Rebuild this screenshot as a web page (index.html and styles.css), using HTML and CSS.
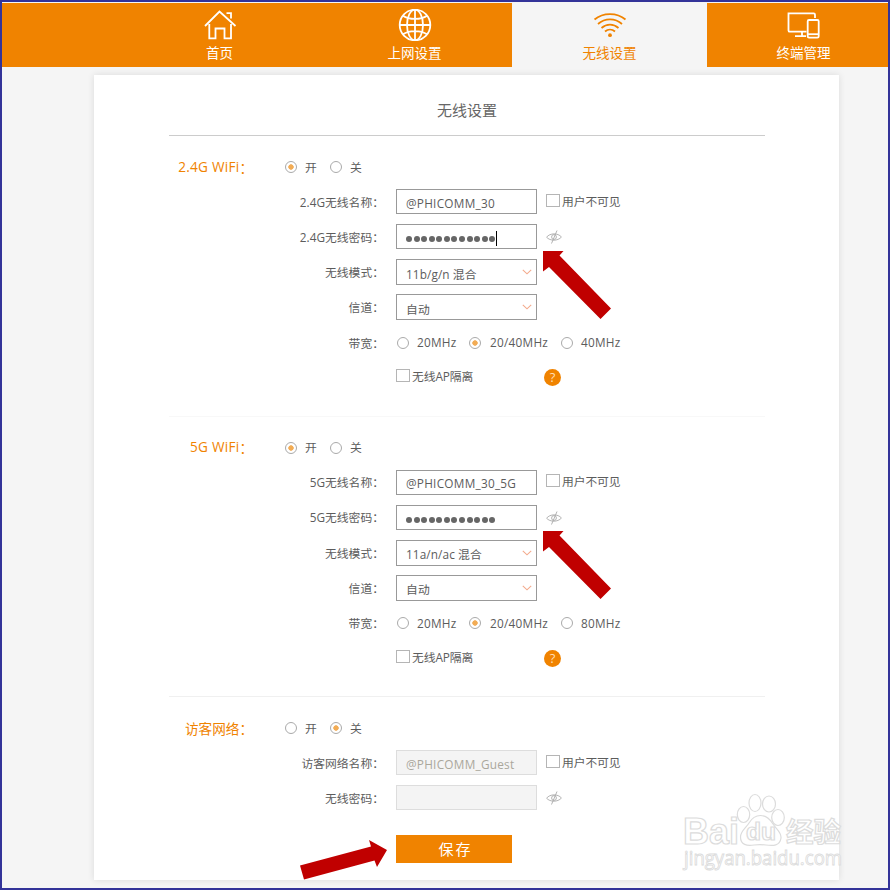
FILE: index.html
```html
<!DOCTYPE html>
<html lang="zh-CN">
<head>
<meta charset="utf-8">
<title>无线设置</title>
<link rel="stylesheet" href="styles.css">
</head>
<body>
<svg width="0" height="0" class="defs">
  <symbol id="eye" viewBox="0 0 16 14"><path d="M.6 7.2C4 2.8 12 2.8 15.4 7 12 11.2 4 11.2.6 7.2Z"/><circle cx="8" cy="7" r="2.4"/><path d="M11 .5 5.500 13.500"/></symbol>
  <symbol id="chev" viewBox="0 0 10 6"><path d="M.8.8 5 4.8 9.200.8"/></symbol>
  <symbol id="arrow" viewBox="0 0 68 69"><path d="M0 0H20.500L16.500 4.500 68 57.500 57.500 68 6 16 0 20.500Z"/></symbol>
</svg>
<div class="window">
  <nav class="nav">
    <a class="tab"><svg width="34" height="32" viewBox="0 0 34 32"><path d="M2 17 16.500 2.500 32.500 17M23.500 4.200H28V9.500M6.300 15V29.300H12.500V19.500H21.500V29.300H28V15"/></svg><span>首页</span></a>
    <a class="tab"><svg width="34" height="32" viewBox="0 0 34 32"><circle cx="17" cy="16" r="15.300"/><ellipse cx="17" cy="16" rx="8" ry="15.300"/><path d="M17 .7V31.300M1.700 16H32.300M5 6.700C11 11 23 11 29 6.700M5 25.300C11 21 23 21 29 25.300"/></svg><span>上网设置</span></a>
    <a class="tab active"><svg width="34" height="32" viewBox="0 0 34 32"><path d="M1.500 10.500C10 3.300 24 3.300 32.500 10.500M5 15C12 8.800 22 8.800 29 15M8.500 19C13.500 14.600 20.500 14.600 25.500 19M12 22.500C15 19.900 19 19.900 22 22.500"/><circle class="dot" cx="17" cy="26.200" r="1.900"/></svg><span>无线设置</span></a>
    <a class="tab last-tab"><svg width="34" height="32" viewBox="0 0 34 32"><path d="M19.500 22.700H2.800Q1.500 22.700 1.500 21.400V4.400H26.700Q28 4.400 28 5.700V9M15 23V27M8 27.200H19"/><rect x="20.700" y="11" width="11" height="17.600" rx="1.300"/><path d="M20.700 25.200H31.700"/></svg><span>终端管理</span></a>
  </nav>
  <main class="card">
    <h1>无线设置</h1>
    <section>
      <div class="row head"><h2><em>2.4G WiFi</em><s>：</s></h2><i class="radio on"></i><b>开</b><i class="radio second"></i><b>关</b></div>
      <div class="row"><label>2.4G无线名称<s>：</s></label><div class="box">@PHICOMM_30</div><span class="check side">用户不可见</span></div>
      <div class="row"><label>2.4G无线密码<s>：</s></label><div class="box"><div class="dots"><i></i><i></i><i></i><i></i><i></i><i></i><i></i><i></i><i></i><i></i><i></i><i></i></div><div class="caret"></div></div><svg class="eye" width="16" height="14"><use href="#eye"/></svg><svg class="arrow" width="68" height="69"><use href="#arrow"/></svg></div>
      <div class="row"><label>无线模式<s>：</s></label><div class="box select">11b/g/n 混合<svg width="10" height="6"><use href="#chev"/></svg></div></div>
      <div class="row"><label>信道<s>：</s></label><div class="box select">自动<svg width="10" height="6"><use href="#chev"/></svg></div></div>
      <div class="row bands"><label>带宽<s>：</s></label><i class="radio"></i><span>20MHz</span><i class="radio on"></i><span>20/40MHz</span><i class="radio"></i><span>40MHz</span></div>
      <div class="row"><label></label><span class="check iso">无线AP隔离</span><span class="help">?</span></div>
    </section>
    <section>
      <div class="row head"><h2><em>5G WiFi</em><s>：</s></h2><i class="radio on"></i><b>开</b><i class="radio second"></i><b>关</b></div>
      <div class="row"><label>5G无线名称<s>：</s></label><div class="box">@PHICOMM_30_5G</div><span class="check side">用户不可见</span></div>
      <div class="row"><label>5G无线密码<s>：</s></label><div class="box"><div class="dots"><i></i><i></i><i></i><i></i><i></i><i></i><i></i><i></i><i></i><i></i><i></i><i></i></div></div><svg class="eye" width="16" height="14"><use href="#eye"/></svg><svg class="arrow" width="68" height="69"><use href="#arrow"/></svg></div>
      <div class="row"><label>无线模式<s>：</s></label><div class="box select">11a/n/ac 混合<svg width="10" height="6"><use href="#chev"/></svg></div></div>
      <div class="row"><label>信道<s>：</s></label><div class="box select">自动<svg width="10" height="6"><use href="#chev"/></svg></div></div>
      <div class="row bands"><label>带宽<s>：</s></label><i class="radio"></i><span>20MHz</span><i class="radio on"></i><span>20/40MHz</span><i class="radio"></i><span>80MHz</span></div>
      <div class="row"><label></label><span class="check iso">无线AP隔离</span><span class="help">?</span></div>
    </section>
    <section class="last">
      <div class="row head"><h2>访客网络<s>：</s></h2><i class="radio"></i><b>开</b><i class="radio on second"></i><b>关</b></div>
      <div class="row"><label>访客网络名称<s>：</s></label><div class="box off">@PHICOMM_Guest</div><span class="check side">用户不可见</span></div>
      <div class="row"><label>无线密码<s>：</s></label><div class="box off"></div><svg class="eye" width="16" height="14"><use href="#eye"/></svg></div>
    </section>
    <div class="save"><button>保存</button><svg class="pointer" width="88" height="42" viewBox="0 0 88 42"><path d="M0 26.500 71 7.500 69 1 87 11 77 28 74.500 21.500 4 40.500Z"/></svg></div>
  </main>
  <svg class="mark" width="180" height="92" viewBox="0 0 180 92">
    <g class="ink">
      <text x="1" y="54" class="bai" textLength="56" lengthAdjust="spacingAndGlyphs">Bai</text>
      <ellipse cx="61.500" cy="24.500" rx="6.200" ry="8"/>
      <ellipse cx="73" cy="13" rx="6" ry="8.500"/>
      <ellipse cx="87" cy="14" rx="6.500" ry="8"/>
      <ellipse cx="96" cy="27.500" rx="6.300" ry="8"/>
      <path transform="translate(-2)" d="M80.500 25.500C86 25.500 90 29 93 34 97 40 101.500 42 101 48 100 56 93 56 86 55 82 54.500 78 54.500 74 55 67 56 60.500 55 60.500 47 60.500 41 66 38 69 33 72 28 75 25.500 80.500 25.500Z"/>
      <text x="64" y="50" class="du" textLength="30" lengthAdjust="spacingAndGlyphs">du</text>
      <text x="104" y="52" class="jy" textLength="55" lengthAdjust="spacingAndGlyphs">经验</text>
      <text x="2" y="75" class="url" textLength="158" lengthAdjust="spacingAndGlyphs">jingyan.baidu.com</text>
    </g>
  </svg>
</div>
</body>
</html>
```
FILE: styles.css
```css
* { box-sizing: border-box; }
body { margin: 0; }
.defs { position: absolute; }
.window {
  position: relative;
  width: 890px;
  height: 890px;
  border: 2px solid #333399;
  padding-top: 1px;
  overflow: hidden;
  background: #f5f5f5;
  font: 11.8px "Open Sans", "Noto Sans CJK SC", sans-serif;
  color: #5c5c5c;
}
.nav { display: flex; height: 64px; padding-left: 120px; background: #f08300; overflow: hidden; }
.tab { flex: 0 0 195px; display: flex; flex-direction: column; align-items: center; padding-top: 6px; color: #fff; font-size: 13.5px; line-height: 20px; }
.tab svg { fill: none; stroke: currentColor; stroke-width: 1.8; margin-bottom: 2px; }
.tab .dot { fill: currentColor; stroke: none; }
.active { background: #f5f5f5; color: #f08300; }
.last-tab { padding-right: 2px; }
.card {
  width: 745px;
  height: 805px;
  margin: 8px 0 0 92px;
  padding: 0 74px 0 75px;
  background: #fff;
  box-shadow: 0 0 7px rgba(0, 0, 0, .11);
}
h1 { margin: 0; height: 61px; padding-top: 1px; border-bottom: 1px solid #ccc; font-size: 15px; line-height: 68px; font-weight: 400; text-align: center; color: #666; }
section { height: 280.5px; padding-top: 14px; border-bottom: 1px solid #f0f0f0; }
section:first-of-type { border-color: #f8f8f8; }
.last { height: 124px; border: 0; }
.row { display: flex; align-items: center; height: 35.25px; position: relative; white-space: nowrap; }
.head { height: 34px; }
s { text-decoration: none; }
em { font-style: normal; letter-spacing: .25px; }
h2 { width: 84px; margin: 0 32px 1px 0; display: flex; justify-content: flex-end; color: #f08300; font-size: 13.6px; font-weight: 400; }
.row b { font-weight: 400; margin: 0 0 2px 8px; width: 13px; }
.radio { flex: none; width: 12px; height: 12px; border: 1px solid #aaa; border-radius: 50%; background: #fff; }
.radio.on { background: radial-gradient(circle, #f2ac55 0 2.4px, #fff 3px); }
.radio.second { margin-left: 12px; }
label { width: 215px; margin: 0 12px 1px 0; text-align: right; }
.box { display: flex; align-items: center; width: 141px; height: 25px; padding: 2px 0 0 9px; border: 1px solid #999; letter-spacing: .25px; }
.select { height: 26px; justify-content: space-between; padding-right: 4px; letter-spacing: .1px; }
.select svg { fill: none; stroke: #f3aa8c; stroke-width: 1.1; margin-bottom: 2px; }
.off { background: #f4f4f4; border-color: #ddd; color: #aaa79c; }
.dots { display: flex; gap: 1.58px; padding-top: 3px; }
.dots i { width: 6px; height: 6px; border-radius: 50%; background: #666; }
.caret { width: 1px; height: 15px; margin: 2px 0 0 1px; background: #000; }
.check { display: flex; align-items: center; gap: 2px; letter-spacing: -.1px; }
.check::before { content: ""; width: 12px; height: 11px; border: 1px solid #b5b5b5; }
.side { margin: 0 0 3px 9px; }
.iso { width: 148px; margin-bottom: 4px; }
.eye { margin: 1px 0 0 9px; fill: none; stroke: #aaa; stroke-width: .9; }
.bands .radio { margin: 0 8px 0 1px; }
.bands span { width: 51px; margin-bottom: 1px; letter-spacing: .25px; }
.bands span:nth-of-type(2) { width: 71px; padding-left: 1px; }
.help { width: 17px; height: 17px; border-radius: 50%; background: #f08300; color: #ffdfb6; text-align: center; line-height: 17px; font-size: 13px; }
.arrow { position: absolute; left: 374px; top: 31.3px; fill: #c00000; }
.save { position: relative; padding: 14px 0 0 227px; }
.save button { display: block; width: 116px; height: 28px; border: 0; padding: 0 0 1px 3px; background: #f08300; color: #fff; font: 15px "Open Sans", "Noto Sans CJK SC", sans-serif; letter-spacing: 2px; }
.pointer { position: absolute; left: 131px; top: 18px; fill: #c00000; }
.mark { position: absolute; left: 680px; top: 788px; }
.ink { fill: rgba(255, 255, 255, .8); stroke: #dcdcdc; stroke-width: 1.2; }
.bai { font: bold 36px "Liberation Sans", sans-serif; }
.du { font: bold 23px "Liberation Sans", sans-serif; }
.jy { font: bold 27px "Noto Sans CJK SC", sans-serif; }
.url { font: 20px "Open Sans", sans-serif; stroke-width: .9; }
```
